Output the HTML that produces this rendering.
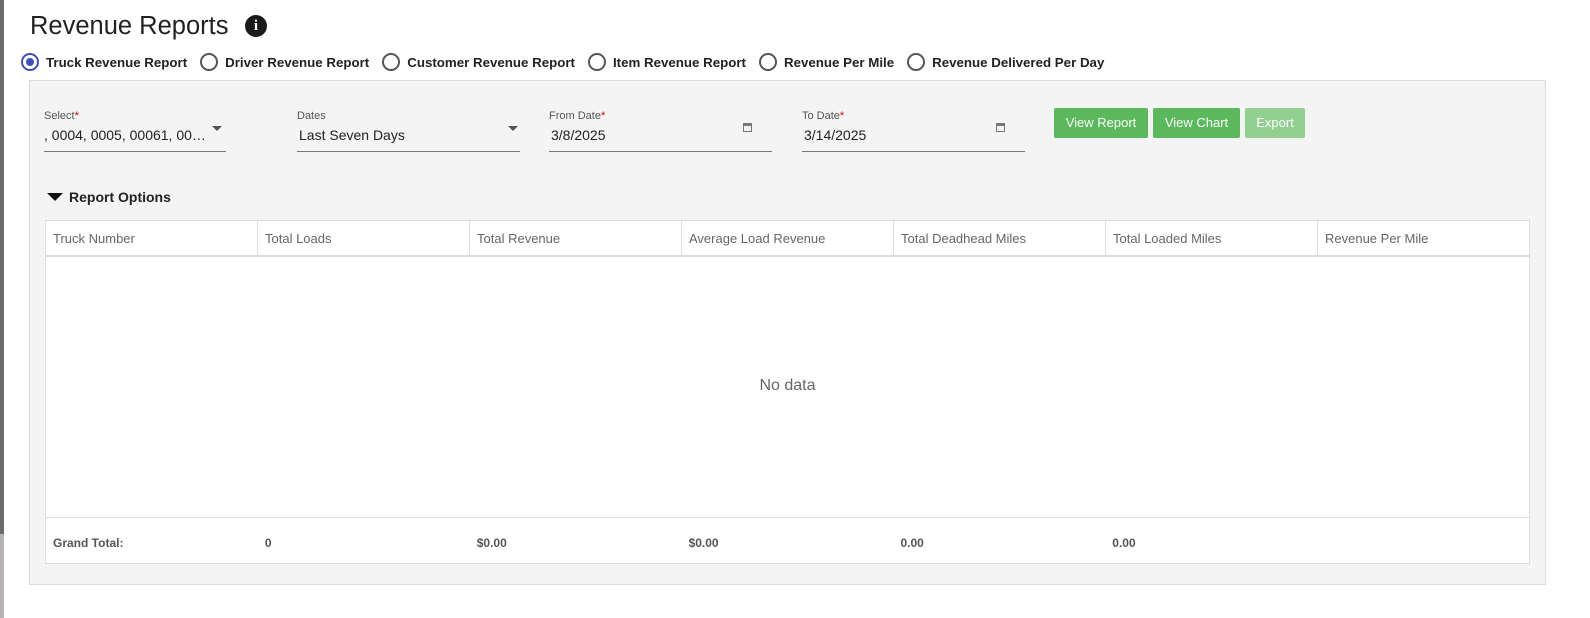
<!DOCTYPE html>
<html><head><style>
body{margin:0;width:1590px;height:618px;background:#fff;font-family:"Liberation Sans",sans-serif;position:relative;overflow:hidden}
.strip{position:absolute;left:0;top:0;width:4px;height:534px;background:#6b6b6b}
.strip2{position:absolute;left:0;top:534px;width:4px;height:84px;background:#b8b4b4}
h1{position:absolute;left:30px;top:12px;margin:0;font-weight:normal;font-size:25.5px;color:#222}
.info{position:absolute;left:245px;top:15px;width:22px;height:22px;border-radius:50%;background:#1a1a1a;color:#fff;font:bold 15px "Liberation Serif",serif;text-align:center;line-height:22px}
.radios{position:absolute;left:21px;top:53px;display:flex;font-weight:bold;font-size:13.3px;color:#222}
.r{display:flex;align-items:center;margin-right:13px}
.c{width:18px;height:18px;border:2px solid #555;border-radius:50%;box-sizing:border-box;margin-right:7px;position:relative}
.c.on{border-color:#3f51b5}
.c.on:after{content:"";position:absolute;left:3px;top:3px;width:8px;height:8px;border-radius:50%;background:#3f51b5}
.panel{position:absolute;left:29px;top:80px;width:1517px;height:505px;background:#f4f4f4;border:1px solid #ddd;box-sizing:border-box}
.f{position:absolute;top:110px;height:41px;border-bottom:1px solid #777}
.f .l{font-size:11px;color:#555}
.f .l b{color:#d00;font-weight:normal}
.f .v{font-size:14px;color:#222;margin-top:5px}
.arr{position:absolute;right:4px;top:16px;border:5px solid transparent;border-top:5px solid #555}
.cal{position:absolute;right:20px;top:13px;width:9px;height:9px;border:1.5px solid #777;border-top-width:3px;box-sizing:border-box}
.btn{position:absolute;top:108px;height:30px;background:#5cb85c;color:#fff;font-size:13px;line-height:30px;text-align:center;border-radius:2px}
.ro{position:absolute;left:47px;top:189px;font-weight:bold;font-size:14px;color:#222}
.ro:before{content:"";display:inline-block;border:8px solid transparent;border-top:8px solid #111;border-bottom:0;margin-right:6px;vertical-align:1px}
.tbl{position:absolute;left:45px;top:220px;width:1485px;height:344px;background:#fff;border:1px solid #ddd;box-sizing:border-box}
.hd{display:flex;height:34px;border-bottom:2px solid #ddd}
.hd div{flex:1;border-right:1px solid #ddd;font-size:13px;color:#666;padding:10px 0 0 7px}
.hd div:last-child{border-right:0}
.nd{position:absolute;left:0;right:0;top:156px;text-align:center;font-size:16px;color:#666}
.ft{position:absolute;left:0;right:0;top:296px;border-top:1px solid #ddd;display:flex;height:46px}
.ft div{flex:1;font-weight:bold;font-size:12px;color:#555;padding:18px 0 0 7px}
</style></head><body>
<div class="strip"></div><div class="strip2"></div>
<h1>Revenue Reports</h1><div class="info">i</div>
<div class="radios">
<div class="r"><span class="c on"></span>Truck Revenue Report</div>
<div class="r"><span class="c"></span>Driver Revenue Report</div>
<div class="r"><span class="c"></span>Customer Revenue Report</div>
<div class="r"><span class="c"></span>Item Revenue Report</div>
<div class="r"><span class="c"></span>Revenue Per Mile</div>
<div class="r"><span class="c"></span>Revenue Delivered Per Day</div>
</div>
<div class="panel"></div>
<div class="f" style="left:44px;width:182px"><div class="l">Select<b>*</b></div><div class="v">, 0004, 0005, 00061, 00…</div><span class="arr"></span></div>
<div class="f" style="left:297px;width:223px"><div class="l">Dates</div><div class="v" style="margin-left:2px">Last Seven Days</div><span class="arr" style="right:2px"></span></div>
<div class="f" style="left:549px;width:223px"><div class="l">From Date<b>*</b></div><div class="v" style="margin-left:2px">3/8/2025</div><span class="cal"></span></div>
<div class="f" style="left:802px;width:223px"><div class="l">To Date<b>*</b></div><div class="v" style="margin-left:2px">3/14/2025</div><span class="cal"></span></div>
<div class="btn" style="left:1054px;width:94px">View Report</div>
<div class="btn" style="left:1153px;width:87px">View Chart</div>
<div class="btn" style="left:1245px;width:60px;background:#92d092">Export</div>
<div class="ro">Report Options</div>
<div class="tbl">
<div class="hd"><div>Truck Number</div><div>Total Loads</div><div>Total Revenue</div><div>Average Load Revenue</div><div>Total Deadhead Miles</div><div>Total Loaded Miles</div><div>Revenue Per Mile</div></div>
<div class="nd">No data</div>
<div class="ft"><div>Grand Total:</div><div>0</div><div>$0.00</div><div>$0.00</div><div>0.00</div><div>0.00</div><div></div></div>
</div>
</body></html>
